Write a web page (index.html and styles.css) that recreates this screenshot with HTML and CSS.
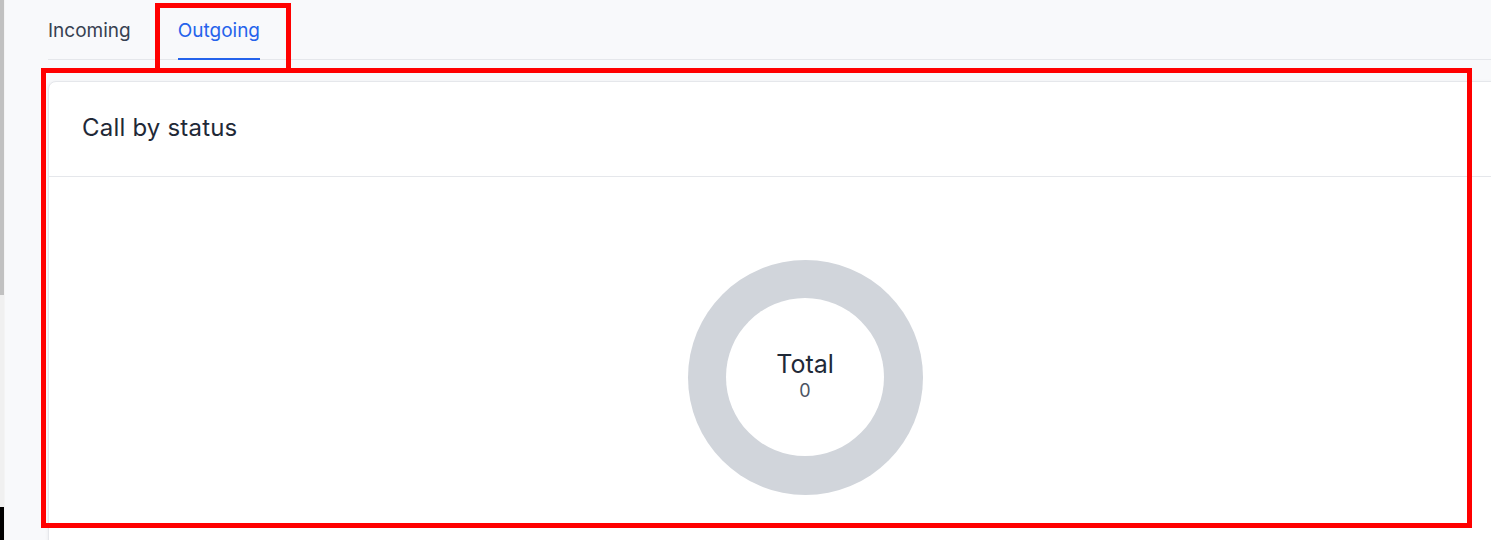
FILE: index.html
```html
<!DOCTYPE html>
<html lang="en">
<head>
  <meta charset="UTF-8">
  <meta name="viewport" content="width=device-width, initial-scale=1.0">
  <title>Call by status</title>
  <link rel="stylesheet" href="styles.css">
</head>
<body>
  <div class="page">
    <div class="scrollbar">
      <div class="scrollbar-thumb"></div>
      <div class="scrollbar-end"></div>
    </div>
    <div class="main">
      <div class="tabs">
        <a href="#" class="tab">Incoming</a>
        <a href="#" class="tab active">Outgoing</a>
      </div>
      <div class="card">
        <div class="card-header">
          <h2>Call by status</h2>
        </div>
        <div class="card-body">
          <div class="donut">
            <div class="donut-label">
              <div class="donut-title">Total</div>
              <div class="donut-value">0</div>
            </div>
          </div>
        </div>
      </div>
    </div>
  </div>

  <div class="mark mark-tab"></div>
  <div class="mark mark-card"></div>
</body>
</html>
```

FILE: styles.css
```css
html, body {
  margin: 0;
  padding: 0;
  height: 100%;
  overflow: hidden;
}

body {
  background: #f8f9fb;
  font-family: Inter, "Noto Sans", sans-serif;
  color: #1f2937;
}

.page {
  display: flex;
  height: 100%;
}

.scrollbar {
  width: 4px;
  flex-shrink: 0;
  background: #f0f0f0;
  border-right: 1px solid #f4f4f4;
  display: flex;
  flex-direction: column;
}

.scrollbar-thumb {
  height: 295px;
  background: #c1c1c1;
}

.scrollbar-end {
  margin-top: auto;
  height: 33px;
  background: #000;
}

.main {
  flex: 1;
  padding-left: 43px;
  min-width: 0;
}

.tabs {
  display: flex;
  gap: 47px;
  border-bottom: 1px solid #e5e7eb;
  height: 59px;
  width: 1600px;
}

.tab {
  display: block;
  padding-top: 19px;
  font-size: 19px;
  line-height: 24px;
  color: #374151;
  text-decoration: none;
  border-bottom: 2px solid transparent;
  margin-bottom: -1px;
  box-sizing: border-box;
  height: 60px;
}

.tab.active {
  color: #2563eb;
  border-bottom-color: #2563eb;
}

.card {
  margin-top: 21px;
  width: 1512px;
  background: #fff;
  border: 1px solid #e5e7eb;
  border-radius: 8px;
  box-shadow: -1px 0 3px rgba(0, 0, 0, 0.04);
}

.card-header {
  padding: 31px 33px 33px;
  border-bottom: 1px solid #e5e7eb;
}

.card-header h2 {
  margin: 0;
  font-size: 24px;
  line-height: 30px;
  font-weight: 400;
  letter-spacing: 0.2px;
  color: #1f2937;
}

.card-body {
  height: 400px;
  display: flex;
  align-items: center;
  justify-content: center;
}

.donut {
  width: 235px;
  height: 235px;
  border-radius: 50%;
  background: #d1d5db;
  display: flex;
  align-items: center;
  justify-content: center;
}

.donut-label {
  width: 158px;
  height: 158px;
  border-radius: 50%;
  background: #fff;
  display: flex;
  flex-direction: column;
  align-items: center;
  justify-content: center;
}

.donut-title {
  font-size: 25px;
  line-height: 30px;
  color: #1f2937;
  margin-top: -3px;
}

.donut-value {
  font-size: 18px;
  line-height: 24px;
  color: #4b5563;
}

/* red highlight boxes drawn over the screenshot */
.mark {
  position: absolute;
  border: 5px solid #ff0000;
  box-sizing: border-box;
  pointer-events: none;
}

.mark-tab {
  left: 155px;
  top: 3px;
  width: 136px;
  height: 70px;
}

.mark-card {
  left: 41px;
  top: 68px;
  width: 1431px;
  height: 460px;
}
```
